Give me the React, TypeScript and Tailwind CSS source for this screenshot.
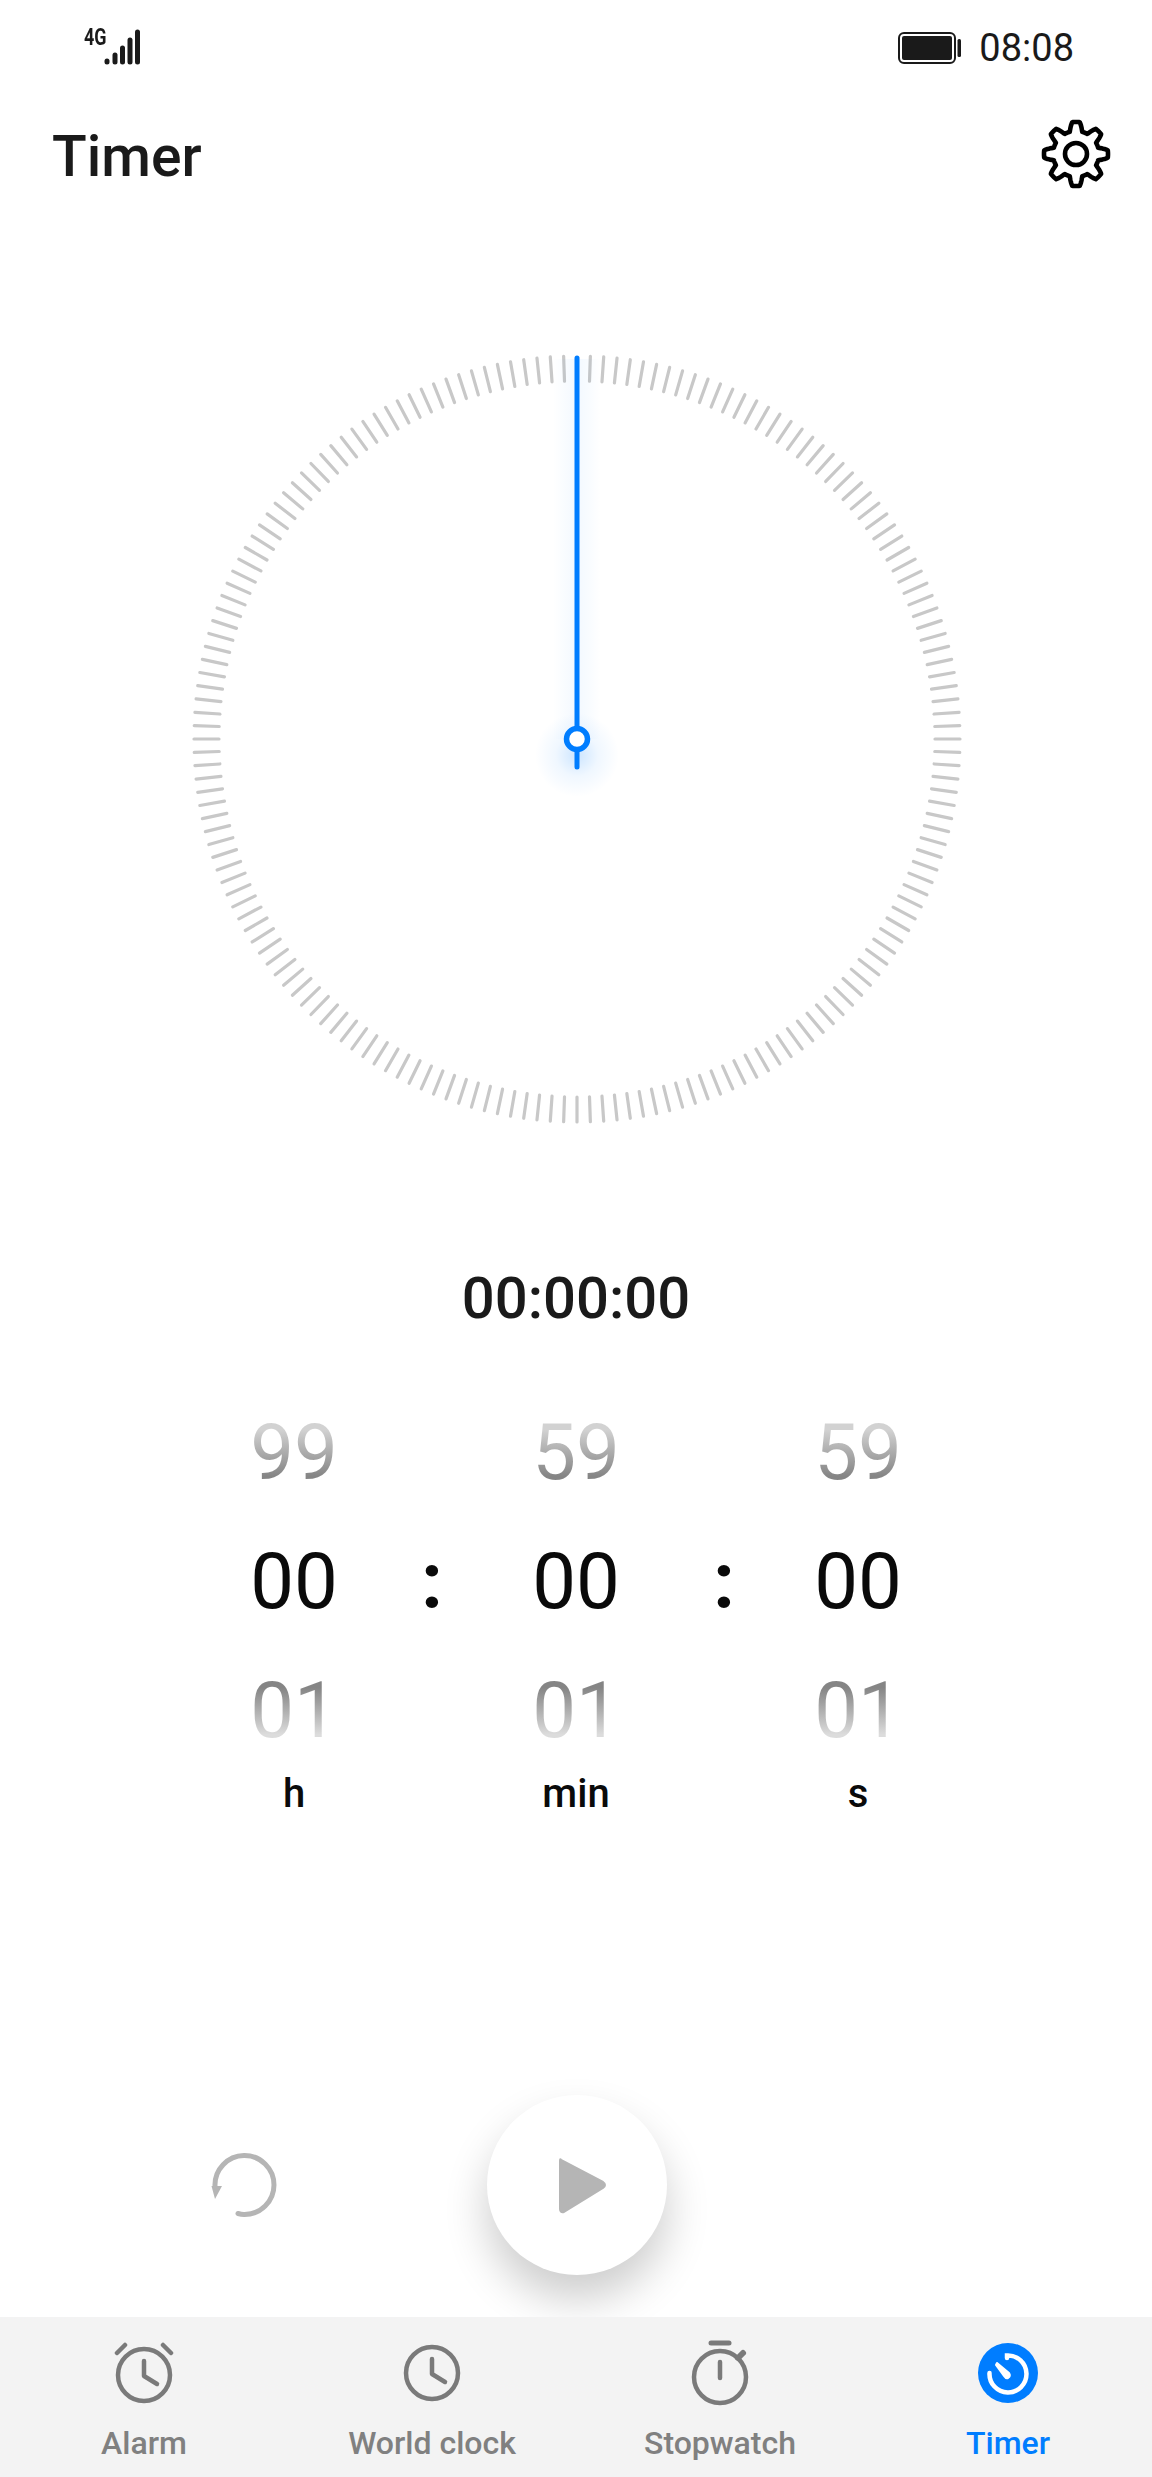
const TICKS = Array.from({ length: 180 }, (_, i) => i);

function gearPath() {
  const pts: string[] = [];
  for (let i = 0; i < 320; i++) {
    const t = (i / 320) * Math.PI * 2;
    const c = Math.cos(8 * t);
    const s = Math.max(-1, Math.min(1, c * 1.7));
    const r = 27.5 + 4.5 * s;
    pts.push(`${(36 + r * Math.sin(t)).toFixed(2)},${(36 - r * Math.cos(t)).toFixed(2)}`);
  }
  return `M${pts.join("L")}Z`;
}

function StatusBar() {
  return (
    <div className="flex h-[96px] items-start justify-between pl-[84px] pr-[78px]">
      <div className="mt-[27px] flex items-start">
        <span className="w-[20px] origin-left scale-x-[0.78] text-[23px] leading-[22px] font-bold text-[#1a1a1a]">
          4G
        </span>
        <svg width="37" height="36" viewBox="0 0 37 36" className="mt-[2px]">
          <g stroke="#1a1a1a" strokeWidth="5" strokeLinecap="round">
            <line x1="3" y1="32" x2="3" y2="33" />
            <line x1="11" y1="26" x2="11" y2="33" />
            <line x1="18.5" y1="19" x2="18.5" y2="33" />
            <line x1="26" y1="11" x2="26" y2="33" />
            <line x1="33.5" y1="3" x2="33.5" y2="33" />
          </g>
        </svg>
      </div>
      <div className="mt-[26px] flex items-center gap-[18px]">
        <svg width="63" height="32" viewBox="0 0 63 32">
          <rect x="1" y="1" width="56" height="30" rx="5" fill="none" stroke="#1a1a1a" strokeWidth="2" />
          <rect x="4" y="4" width="50" height="24" rx="2" fill="#1a1a1a" />
          <rect x="59.5" y="7" width="3.5" height="18" rx="1.5" fill="#1a1a1a" />
        </svg>
        <span className="text-[38px] leading-[44px] text-[#1a1a1a]">08:08</span>
      </div>
    </div>
  );
}

function TitleRow() {
  return (
    <div className="flex h-[116px] items-center justify-between pl-[52px] pr-[40px]">
      <h1 className="mt-[6px] text-[57px] leading-[68px] font-medium text-[#1a1a1a]">Timer</h1>
      <svg width="72" height="72" viewBox="0 0 72 72">
        <path d={gearPath()} fill="none" stroke="#000" strokeWidth="4.6" strokeLinejoin="round" />
        <circle cx="36" cy="36" r="11" fill="none" stroke="#000" strokeWidth="4.6" />
      </svg>
    </div>
  );
}

function Dial() {
  return (
    <svg width="780" height="780" viewBox="-390 -390 780 780" className="mt-[137px] ml-[187px] block">
      <defs>
        <linearGradient id="needleGlow" x1="0" x2="1" y1="0" y2="0">
          <stop offset="0" stopColor="#007dff" stopOpacity="0" />
          <stop offset="0.5" stopColor="#007dff" stopOpacity="0.05" />
          <stop offset="1" stopColor="#007dff" stopOpacity="0" />
        </linearGradient>
        <radialGradient id="pivotGlow">
          <stop offset="0" stopColor="#007dff" stopOpacity="0.2" />
          <stop offset="0.5" stopColor="#007dff" stopOpacity="0.06" />
          <stop offset="1" stopColor="#007dff" stopOpacity="0" />
        </radialGradient>
      </defs>
      {TICKS.map((i) =>
        i === 0 ? null : (
          <line
            key={i}
            x1="0"
            y1="-358"
            x2="0"
            y2="-383"
            stroke="#c8c8c8"
            strokeWidth="3.2"
            strokeLinecap="round"
            transform={`rotate(${i * 2})`}
          />
        ),
      )}
      <rect x="-24" y="-380" width="48" height="380" fill="url(#needleGlow)" />
      <circle cx="0" cy="16" r="42" fill="url(#pivotGlow)" />
      <line x1="0" y1="-381" x2="0" y2="28" stroke="#007dff" strokeWidth="5" strokeLinecap="round" />
      <circle cx="0" cy="0" r="10.5" fill="#fff" stroke="#007dff" strokeWidth="5.5" />
    </svg>
  );
}

function WheelColumn({ prev, cur, next, unit, className }: { prev: string; cur: string; next: string; unit: string; className: string }) {
  return (
    <div className={`flex flex-col items-center ${className}`}>
      <div className="flex h-[129px] items-center">
        <span className="bg-linear-to-b from-[#d2d2d2] from-20% to-[#858585] to-80% bg-clip-text text-[78px] leading-[78px] text-transparent">
          {prev}
        </span>
      </div>
      <div className="flex h-[129px] items-center">
        <span className="text-[78px] leading-[78px] text-[#0a0a0a]">{cur}</span>
      </div>
      <div className="flex h-[129px] items-center">
        <span className="bg-linear-to-b from-[#858585] from-20% to-[#dcdcdc] to-80% bg-clip-text text-[78px] leading-[78px] text-transparent">
          {next}
        </span>
      </div>
      <span className="-mt-[5px] text-[40px] leading-[48px] font-medium text-[#0a0a0a]">{unit}</span>
    </div>
  );
}

function Colon({ className }: { className: string }) {
  return (
    <div className={`flex h-[387px] items-center justify-center text-[78px] leading-[78px] font-bold text-[#0a0a0a] ${className}`}>
      :
    </div>
  );
}

function Wheels() {
  return (
    <div className="mt-[56px] flex pl-[194px]">
      <WheelColumn prev="99" cur="00" next="01" unit="h" className="w-[200px]" />
      <Colon className="w-[76px]" />
      <WheelColumn prev="59" cur="00" next="01" unit="min" className="w-[212px]" />
      <Colon className="w-[84px]" />
      <WheelColumn prev="59" cur="00" next="01" unit="s" className="w-[184px]" />
    </div>
  );
}

function Controls() {
  return (
    <div className="flex flex-1 items-end pb-[42px] pl-[208px]">
      <svg width="72" height="72" viewBox="0 0 72 72" className="mb-[53px]">
        <path
          d="M30 63.5 C 33 64.4 34.5 64.5 36 64.5 A 29.5 29.5 0 1 0 7 36"
          fill="none"
          stroke="#b5b5b5"
          strokeWidth="5"
          strokeLinecap="round"
        />
        <path d="M3.5 36 L14 36 L7 49 Z" fill="#b5b5b5" />
      </svg>
      <div className="ml-[207px] flex h-[180px] w-[180px] items-center justify-center rounded-full bg-white shadow-[0_24px_44px_rgba(0,0,0,0.2)]">
        <svg width="52" height="60" viewBox="0 0 52 60" className="ml-[11px]">
          <path
            d="M4 5 L46 27 Q50 30 46 33 L7 57 Q3 58 3 54 L3 6 Q3 3 4 5 Z"
            fill="#b5b5b5"
            stroke="#b5b5b5"
            strokeWidth="2"
            strokeLinejoin="round"
          />
        </svg>
      </div>
    </div>
  );
}

function Tab({ label, active, children }: { label: string; active?: boolean; children: React.ReactNode }) {
  return (
    <div className="flex w-[288px] flex-col items-center">
      <div className="flex h-[68px] w-[72px] items-center justify-center">{children}</div>
      <span className={`mt-[17px] text-[32px] leading-[38px] font-medium ${active ? "text-[#007dff]" : "text-[#808080]"}`}>
        {label}
      </span>
    </div>
  );
}

function TabBar() {
  const g = "#7a7a7a";
  return (
    <div className="flex h-[160px] bg-[#f3f3f3] pt-[22px]">
      <Tab label="Alarm">
        <svg width="60" height="62" viewBox="0 0 60 62" fill="none" stroke={g} strokeWidth="4.5" strokeLinecap="round" strokeLinejoin="round">
          <circle cx="30" cy="33" r="26" />
          <path d="M30 19 V34 L43 42" />
          <path d="M3 11 L11 3 M49 3 L57 11" />
        </svg>
      </Tab>
      <Tab label="World clock">
        <svg width="60" height="60" viewBox="0 0 60 60" fill="none" stroke={g} strokeWidth="4.5" strokeLinecap="round" strokeLinejoin="round">
          <circle cx="30" cy="30" r="26" />
          <path d="M30 16 V31 L43 39" />
        </svg>
      </Tab>
      <Tab label="Stopwatch">
        <svg width="60" height="66" viewBox="0 0 60 66" fill="none" stroke={g} strokeWidth="4.5" strokeLinecap="round" strokeLinejoin="round">
          <circle cx="30" cy="37" r="26" />
          <path d="M21 3 H39" strokeWidth="5" />
          <path d="M30 22 V38" />
          <path d="M48 18 L53 13" strokeWidth="6" />
        </svg>
      </Tab>
      <Tab label="Timer" active>
        <svg width="60" height="60" viewBox="0 0 60 60">
          <circle cx="30" cy="30" r="30" fill="#007dff" />
          <path
            d="M29 15 V12.5 A 18.5 18.5 0 1 1 11.5 30"
            fill="none"
            stroke="#fff"
            strokeWidth="4.5"
            strokeLinecap="round"
          />
          <path d="M19 20 L31 30 Q33 33 30 35 Q28 36 26 33 L18 22 Z" fill="#fff" stroke="#fff" strokeWidth="2" strokeLinejoin="round" />
        </svg>
      </Tab>
    </div>
  );
}

export default function App() {
  return (
    <div className="flex h-[2477px] w-[1152px] flex-col overflow-hidden bg-white font-['Roboto',sans-serif]">
      <StatusBar />
      <TitleRow />
      <Dial />
      <div className="mt-[135px] text-center text-[58px] leading-[68px] font-medium text-[#1a1a1a]">00:00:00</div>
      <Wheels />
      <Controls />
      <TabBar />
    </div>
  );
}
